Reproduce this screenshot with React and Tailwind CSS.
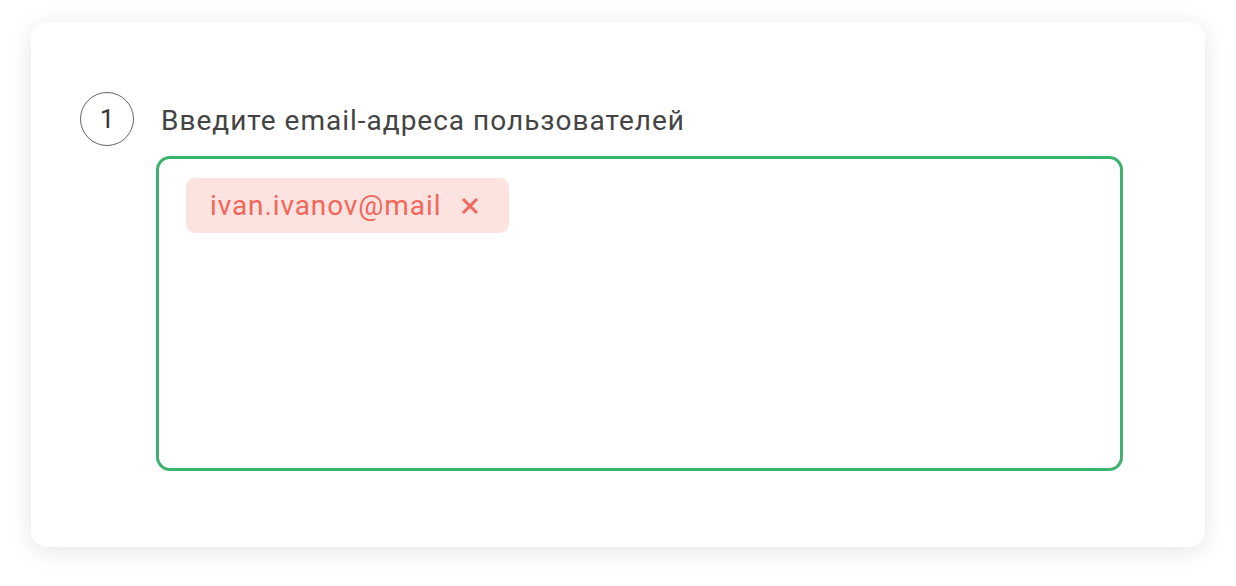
import React from "react";

export default function App() {
  return (
    <div className="w-[1236px] h-[586px] bg-white pt-[22px] pl-[31px]" style={{ fontFamily: "Roboto, 'Noto Sans', sans-serif" }}>
      <div className="w-[1174px] h-[525px] bg-white rounded-[16px] shadow-[0_4px_24px_rgba(0,0,0,0.10)] pt-[70px] pl-[49px] flex">
        <div className="w-[54px] h-[54px] shrink-0 rounded-full border-[1.5px] border-[#666] flex items-center justify-center text-[26px] text-[#333] leading-none">
          1
        </div>
        <div className="ml-[22px] flex flex-col">
          <div className="h-[54px] flex items-center pl-[5px] pt-[3px] text-[28px] tracking-[1px] text-[#444] leading-none">
            Введите email-адреса пользователей
          </div>
          <div className="mt-[10px] w-[967px] h-[315px] border-[3px] border-[#3db26e] rounded-[14px] pt-[19px] pl-[27px]">
            <div className="inline-flex items-center h-[55px] rounded-[9px] bg-[#fde3df] pl-[24px] pr-[29px] text-[#f2675b] text-[28px] tracking-[0.9px] leading-none">
              <span>ivan.ivanov@mail</span>
              <svg className="ml-[19px]" width="20" height="20" viewBox="0 0 20 20" fill="none">
                <path d="M3 3L17 17M17 3L3 17" stroke="#f2675b" strokeWidth="3" strokeLinecap="butt" />
              </svg>
            </div>
          </div>
        </div>
      </div>
    </div>
  );
}
